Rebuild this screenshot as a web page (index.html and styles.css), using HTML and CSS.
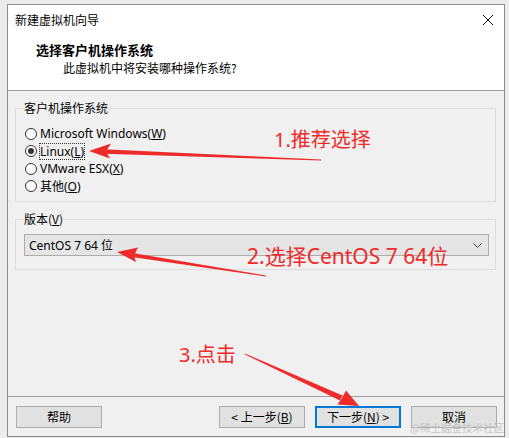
FILE: index.html
```html
<!DOCTYPE html>
<html lang="zh">
<head>
<meta charset="utf-8">
<title>新建虚拟机向导</title>
<link rel="stylesheet" href="styles.css">
</head>
<body>
<div class="window">
  <div class="titlebar">
    <span class="title-text">新建虚拟机向导</span>
    <svg class="close" width="12" height="12" viewBox="0 0 12 12"><path d="M1 1 L11 11 M11 1 L1 11" stroke="#111" stroke-width="1" fill="none"/></svg>
  </div>
  <div class="header">
    <div class="h-title">选择客户机操作系统</div>
    <div class="h-sub">此虚拟机中将安装哪种操作系统?</div>
  </div>
  <div class="body">
    <fieldset class="group group-os">
      <legend class="legend">客户机操作系统</legend>
      <div class="radio"><span class="dot"></span><span>Microsoft Windows(<u>W</u>)</span></div>
      <div class="radio checked"><span class="dot"></span><span class="focus">Linux(<u>L</u>)</span></div>
      <div class="radio"><span class="dot"></span><span>VMware ESX(<u>X</u>)</span></div>
      <div class="radio"><span class="dot"></span><span>其他(<u>O</u>)</span></div>
    </fieldset>
    <fieldset class="group group-ver">
      <legend class="legend">版本(<u>V</u>)</legend>
      <div class="select">
        <span>CentOS 7 64 位</span>
        <svg width="9" height="5" viewBox="0 0 9 5"><path d="M0.5 0.5 L4.5 4.5 L8.5 0.5" stroke="#444" stroke-width="1" fill="none"/></svg>
      </div>
    </fieldset>
  </div>
  <div class="footer">
    <button class="btn btn-help">帮助</button>
    <button class="btn">&lt; 上一步(<u>B</u>)</button>
    <button class="btn btn-default">下一步(<u>N</u>) &gt;</button>
    <button class="btn">取消</button>
  </div>
</div>

<div class="overlay">
  <svg class="arrows" width="509" height="438" viewBox="0 0 509 438">
    <g fill="#ee2a2a">
      <polygon points="104,149.3 104,153.7 321,160.6 321,159.6"/>
      <polygon points="89,151 111,143.5 106,151.5 110,158.5"/>
      <polygon points="134,253.2 133.5,257.2 266,276.6 266,275.6"/>
      <polygon points="117,252 138,247.5 134,255.5 136,262"/>
      <polygon points="245,353.6 245,354.6 340,400.4 342.5,395.6"/>
      <polygon points="359,406 337.5,404.5 342,398 346,390.5"/>
    </g>
  </svg>
  <span class="note note1">1.推荐选择</span>
  <span class="note note2">2.选择CentOS 7 64位</span>
  <span class="note note3">3.点击</span>
  <span class="watermark">@稀土掘金技术社区</span>
</div>
</body>
</html>
```

FILE: styles.css
```css
html, body {
  margin: 0;
  padding: 0;
}
body {
  width: 509px;
  height: 438px;
  background: #ececec;
  font-family: "Noto Sans", "Noto Sans CJK SC", sans-serif;
  font-size: 12px;
  color: #000;
  overflow: hidden;
  position: relative;
}
.window {
  margin: 4px 0 0 7px;
  width: 498px;
  height: 433px;
  box-sizing: border-box;
  border: 1px solid #8c8c8c;
  background: #f0f0f0;
  display: flex;
  flex-direction: column;
}
.titlebar {
  height: 30px;
  background: #fff;
  display: flex;
  align-items: center;
  justify-content: space-between;
  padding: 0 8px 0 7px;
}
.title-text {
  font-family: "Noto Sans CJK SC", sans-serif;
  font-size: 12px;
  line-height: 30px;
}
.close {
  margin-right: 2px;
}
.header {
  height: 49px;
  background: #fff;
  border-bottom: 1px solid #a0a0a0;
  padding-top: 6px;
  box-sizing: content-box;
}
.h-title {
  font-family: "Noto Sans CJK SC", sans-serif;
  font-weight: bold;
  font-size: 13px;
  line-height: 18px;
  padding-left: 28px;
}
.h-sub {
  font-family: "Noto Sans CJK SC", sans-serif;
  font-size: 12px;
  line-height: 18px;
  padding-left: 55px;
}
.body {
  flex: 1;
  display: flex;
  flex-direction: column;
}
.group {
  margin: 9px 8px 0 7px;
  border: 1px solid #dcdcdc;
  padding: 8px 6px 7px 8px;
  min-width: 0;
}
.legend {
  padding: 0;
  line-height: 16px;
  font-family: "Noto Sans CJK SC", "Noto Sans", sans-serif;
  color: #000;
}
.group-os {
  padding-top: 9px;
  padding-bottom: 6px;
}
.radio {
  height: 17.5px;
  display: flex;
  align-items: center;
  gap: 3px;
  padding-left: 1px;
  white-space: nowrap;
}
.dot {
  width: 12px;
  height: 12px;
  box-sizing: border-box;
  border: 1px solid #333;
  border-radius: 50%;
  background: #fff;
  display: flex;
  align-items: center;
  justify-content: center;
  flex: none;
}
.radio.checked .dot::after {
  content: "";
  width: 6px;
  height: 6px;
  border-radius: 50%;
  background: #333;
}
.focus {
  outline: 1px dotted #333;
  outline-offset: -1px;
  padding: 0 1px;
  margin-left: -1px;
}
.group-ver {
  margin-top: 9px;
  padding: 7px 6px 13px 8px;
}
.select {
  height: 22px;
  box-sizing: border-box;
  border: 1px solid #acacac;
  background: #e5e5e5;
  display: flex;
  align-items: center;
  justify-content: space-between;
  padding: 0 6px 0 4px;
}
.footer {
  border-top: 1px solid #a0a0a0;
  padding: 9px 7px 8px 8px;
  display: flex;
  gap: 10px;
}
.btn {
  width: 86px;
  height: 22px;
  box-sizing: border-box;
  border: 1px solid #adadad;
  background: #e1e1e1;
  font-family: "Noto Sans CJK SC", "Noto Sans", sans-serif;
  font-size: 12px;
  color: #000;
  padding: 0;
  margin: 0;
  line-height: 18px;
}
.btn-help {
  margin-right: auto;
}
.btn-default {
  border: 2px solid #0078d7;
}
.overlay {
  position: absolute;
  left: 0;
  top: 0;
  width: 509px;
  height: 438px;
  pointer-events: none;
}
.arrows {
  position: absolute;
  left: 0;
  top: 0;
}
.note {
  position: absolute;
  color: #ee2a2a;
  font-family: "Noto Sans", "Noto Sans CJK SC", sans-serif;
  font-size: 20px;
  line-height: 24px;
  white-space: nowrap;
}
.note1 { left: 274px; top: 128px; }
.note2 { left: 247px; top: 244px; font-size: 21px; }
.note3 { left: 179px; top: 343px; }
.watermark {
  position: absolute;
  left: 410px;
  top: 421px;
  font-family: "Noto Sans CJK SC", sans-serif;
  font-size: 10.5px;
  line-height: 14px;
  color: #c4c4c4;
  white-space: nowrap;
}
```
